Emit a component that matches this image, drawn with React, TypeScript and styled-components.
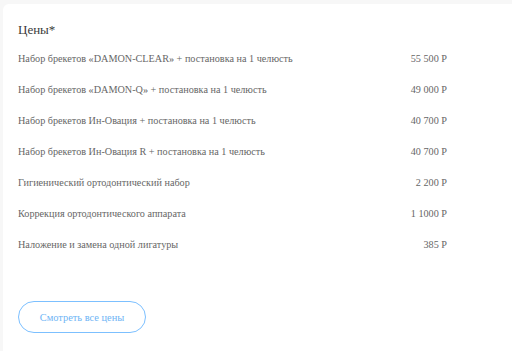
import React from 'react';
import styled, { createGlobalStyle } from 'styled-components';

const serif = `"Liberation Serif", "Times New Roman", serif`;

const GlobalStyle = createGlobalStyle`
    html, body {
        margin: 0;
        padding: 0;
        background: #f7f7f7;
        font-family: ${serif};
    }
`;

const Page = styled.div`
    padding: 4px 0 0 3px;
    height: 351px;
    box-sizing: border-box;
    overflow: hidden;
`;

const Card = styled.section`
    background: #ffffff;
    border-radius: 6px 0 0 0;
    padding: 18px 65px 40px 15px;
    min-height: 400px;
    box-sizing: border-box;
`;

const Title = styled.h2`
    margin: 0 0 5px;
    font-size: 13px;
    font-weight: 400;
    color: #3a3a3a;
    line-height: 16px;
`;

const PriceList = styled.ul`
    list-style: none;
    margin: 0;
    padding: 0;
`;

const PriceRow = styled.li`
    display: flex;
    justify-content: space-between;
    align-items: center;
    height: 31px;
    font-size: 10.2px;
    color: #666666;
`;

const Price = styled.span`
    white-space: nowrap;
`;

const MoreButton = styled.button`
    margin-top: 41px;
    width: 128px;
    height: 32px;
    border: 1px solid #7cc0ff;
    border-radius: 16px;
    background: #ffffff;
    color: #6fb5f5;
    font-family: ${serif};
    font-size: 10.4px;
    cursor: pointer;
`;

const prices = [
    { name: 'Набор брекетов «DAMON-CLEAR» + постановка на 1 челюсть', price: '55 500 Р' },
    { name: 'Набор брекетов «DAMON-Q» + постановка на 1 челюсть', price: '49 000 Р' },
    { name: 'Набор брекетов Ин-Овация + постановка на 1 челюсть', price: '40 700 Р' },
    { name: 'Набор брекетов Ин-Овация R + постановка на 1 челюсть', price: '40 700 Р' },
    { name: 'Гигиенический ортодонтический набор', price: '2 200 Р' },
    { name: 'Коррекция ортодонтического аппарата', price: '1 1000 Р' },
    { name: 'Наложение и замена одной лигатуры', price: '385 Р' },
];

const App = () => (
    <>
        <GlobalStyle />
        <Page>
            <Card>
                <Title>Цены*</Title>
                <PriceList>
                    {prices.map(item => (
                        <PriceRow key={item.name}>
                            <span>{item.name}</span>
                            <Price>{item.price}</Price>
                        </PriceRow>
                    ))}
                </PriceList>
                <MoreButton>Смотреть все цены</MoreButton>
            </Card>
        </Page>
    </>
);

export default App;
